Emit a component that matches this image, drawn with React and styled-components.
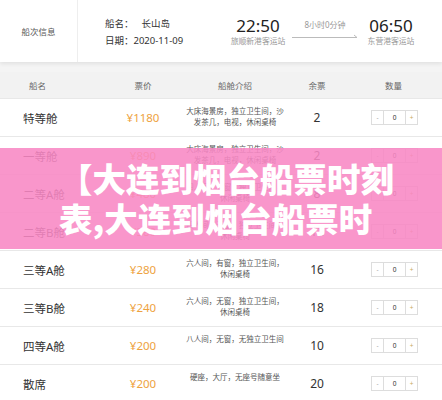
import styled, { createGlobalStyle } from "styled-components";

const Global = createGlobalStyle`
    body {
        margin: 0;
        background: #f4f4f4;
        font-family: "Noto Sans", "Noto Sans CJK SC", sans-serif;
        color: #333;
    }
`;

const Page = styled.div`
    position: relative;
    width: 442px;
    height: 400px;
    overflow: hidden;
`;

const InfoCard = styled.div`
    display: flex;
    height: 62px;
    background: #fff;
    box-shadow: 0 2px 4px rgba(0, 0, 0, 0.08);
    margin-bottom: 10px;
`;

const InfoLabel = styled.div`
    width: 77px;
    border-right: 1px solid #eee;
    display: flex;
    align-items: center;
    justify-content: center;
    font-size: 8.5px;
    color: #555;
`;

const ShipInfo = styled.div`
    width: 125px;
    padding-left: 27px;
    display: flex;
    flex-direction: column;
    justify-content: center;
    gap: 3px;
    font-size: 9.5px;
    color: #333;
    .gap {
        margin-left: 8px;
    }
`;

const Stop = styled.div`
    width: 56px;
    display: flex;
    flex-direction: column;
    align-items: center;
    justify-content: center;
    .time {
        font-size: 17px;
        line-height: 18px;
        color: #222;
    }
    .station {
        font-size: 7.8px;
        color: #999;
        white-space: nowrap;
    }
`;

const Duration = styled.div`
    width: 66px;
    margin: 0 5px 0 6px;
    display: flex;
    flex-direction: column;
    justify-content: center;
    align-items: center;
    font-size: 8px;
    color: #999;
    padding-bottom: 6px;
    svg {
        display: block;
        margin-top: 3px;
    }
`;

const HeaderRow = styled.div`
    display: grid;
    grid-template-columns: 105px 76px 108px 56px 1fr;
    height: 26px;
    align-items: center;
    text-align: center;
    font-size: 8.5px;
    color: #666;
    background: #f2f2f2;
    div:first-child {
        text-align: left;
        padding-left: 29px;
    }
`;

const Row = styled.div`
    display: grid;
    grid-template-columns: 105px 76px 108px 56px 1fr;
    height: 37px;
    align-items: center;
    background: #fff;
    border-top: 1px solid #e8e8e8;
`;

const Name = styled.div`
    padding-left: 23px;
    font-size: 11.5px;
    color: #333;
`;

const Price = styled.div`
    text-align: center;
    font-size: 11.5px;
    color: #eea240;
`;

const Desc = styled.div`
    height: 24px;
    font-size: 7.5px;
    line-height: 11px;
    color: #555;
    text-align: center;
    padding: 0 4px;
    word-break: break-all;
`;

const Left = styled.div`
    text-align: center;
    font-size: 12px;
    color: #333;
`;

const Stepper = styled.div`
    display: flex;
    height: 13px;
    width: 45px;
    margin-left: 26px;
    border: 1px solid #ddd;
    font-size: 6.5px;
    span {
        display: flex;
        align-items: center;
        justify-content: center;
        color: #aaa;
        width: 11px;
    }
    span.num {
        flex: 1;
        color: #333;
        border-left: 1px solid #ddd;
        border-right: 1px solid #ddd;
    }
    span.plus {
        color: #c9a960;
    }
`;

const Overlay = styled.div`
    position: absolute;
    left: 0;
    right: 0;
    top: 148px;
    height: 101px;
    background: rgba(248, 136, 196, 0.88);
    display: flex;
    align-items: center;
    justify-content: center;
`;

const Title = styled.div`
    width: 338px;
    margin-left: 14px;
    margin-top: -2px;
    font-family: "Noto Sans CJK SC", sans-serif;
    font-weight: 900;
    font-size: 33.5px;
    line-height: 40px;
    color: #fff;
    word-break: break-all;
`;

const cabins = [
    { name: "特等舱", price: 1180, desc: "大床海景房，独立卫生间，沙发茶几，电视，休闲桌椅", left: 2 },
    { name: "一等舱", price: 890, desc: "大床海景房，独立卫生间，沙发茶几，电视，休闲桌椅", left: 2 },
    { name: "二等A舱", price: 480, desc: "四人间，有窗，独立卫生间，休闲桌椅", left: 8 },
    { name: "二等B舱", price: 380, desc: "四人间，无窗，独立卫生间，休闲桌椅", left: 12 },
    { name: "三等A舱", price: 280, desc: "六人间，有窗，独立卫生间，休闲桌椅", left: 16 },
    { name: "三等B舱", price: 240, desc: "六人间，无窗，独立卫生间，休闲桌椅", left: 18 },
    { name: "四等A舱", price: 200, desc: "八人间，无窗，无独立卫生间", left: 10 },
    { name: "散席", price: 200, desc: "硬座，大厅，无座号随意坐", left: 20 },
];

export default function App() {
    return (
        <Page>
            <Global />
            <InfoCard>
                <InfoLabel>船次信息</InfoLabel>
                <ShipInfo>
                    <div>船名：<span className="gap">长山岛</span></div>
                    <div>日期：2020-11-09</div>
                </ShipInfo>
                <Stop>
                    <div className="time">22:50</div>
                    <div className="station">旅顺新港客运站</div>
                </Stop>
                <Duration>
                    <div>8小时0分钟</div>
                    <svg width="66" height="5" viewBox="0 0 66 5">
                        <path d="M0 4.5 H65 M62 2 L65 4.5" stroke="#bbb" strokeWidth="1" fill="none" />
                    </svg>
                </Duration>
                <Stop>
                    <div className="time">06:50</div>
                    <div className="station">东营港客运站</div>
                </Stop>
            </InfoCard>

            <HeaderRow>
                <div>船名</div>
                <div>票价</div>
                <div>船舱介绍</div>
                <div>余票</div>
                <div>数量</div>
            </HeaderRow>

            {cabins.map((c) => (
                <Row key={c.name}>
                    <Name>{c.name}</Name>
                    <Price>¥{c.price}</Price>
                    <Desc>{c.desc}</Desc>
                    <Left>{c.left}</Left>
                    <Stepper>
                        <span>-</span>
                        <span className="num">0</span>
                        <span className="plus">+</span>
                    </Stepper>
                </Row>
            ))}

            <Overlay>
                <Title>【大连到烟台船票时刻表,大连到烟台船票时</Title>
            </Overlay>
        </Page>
    );
}
